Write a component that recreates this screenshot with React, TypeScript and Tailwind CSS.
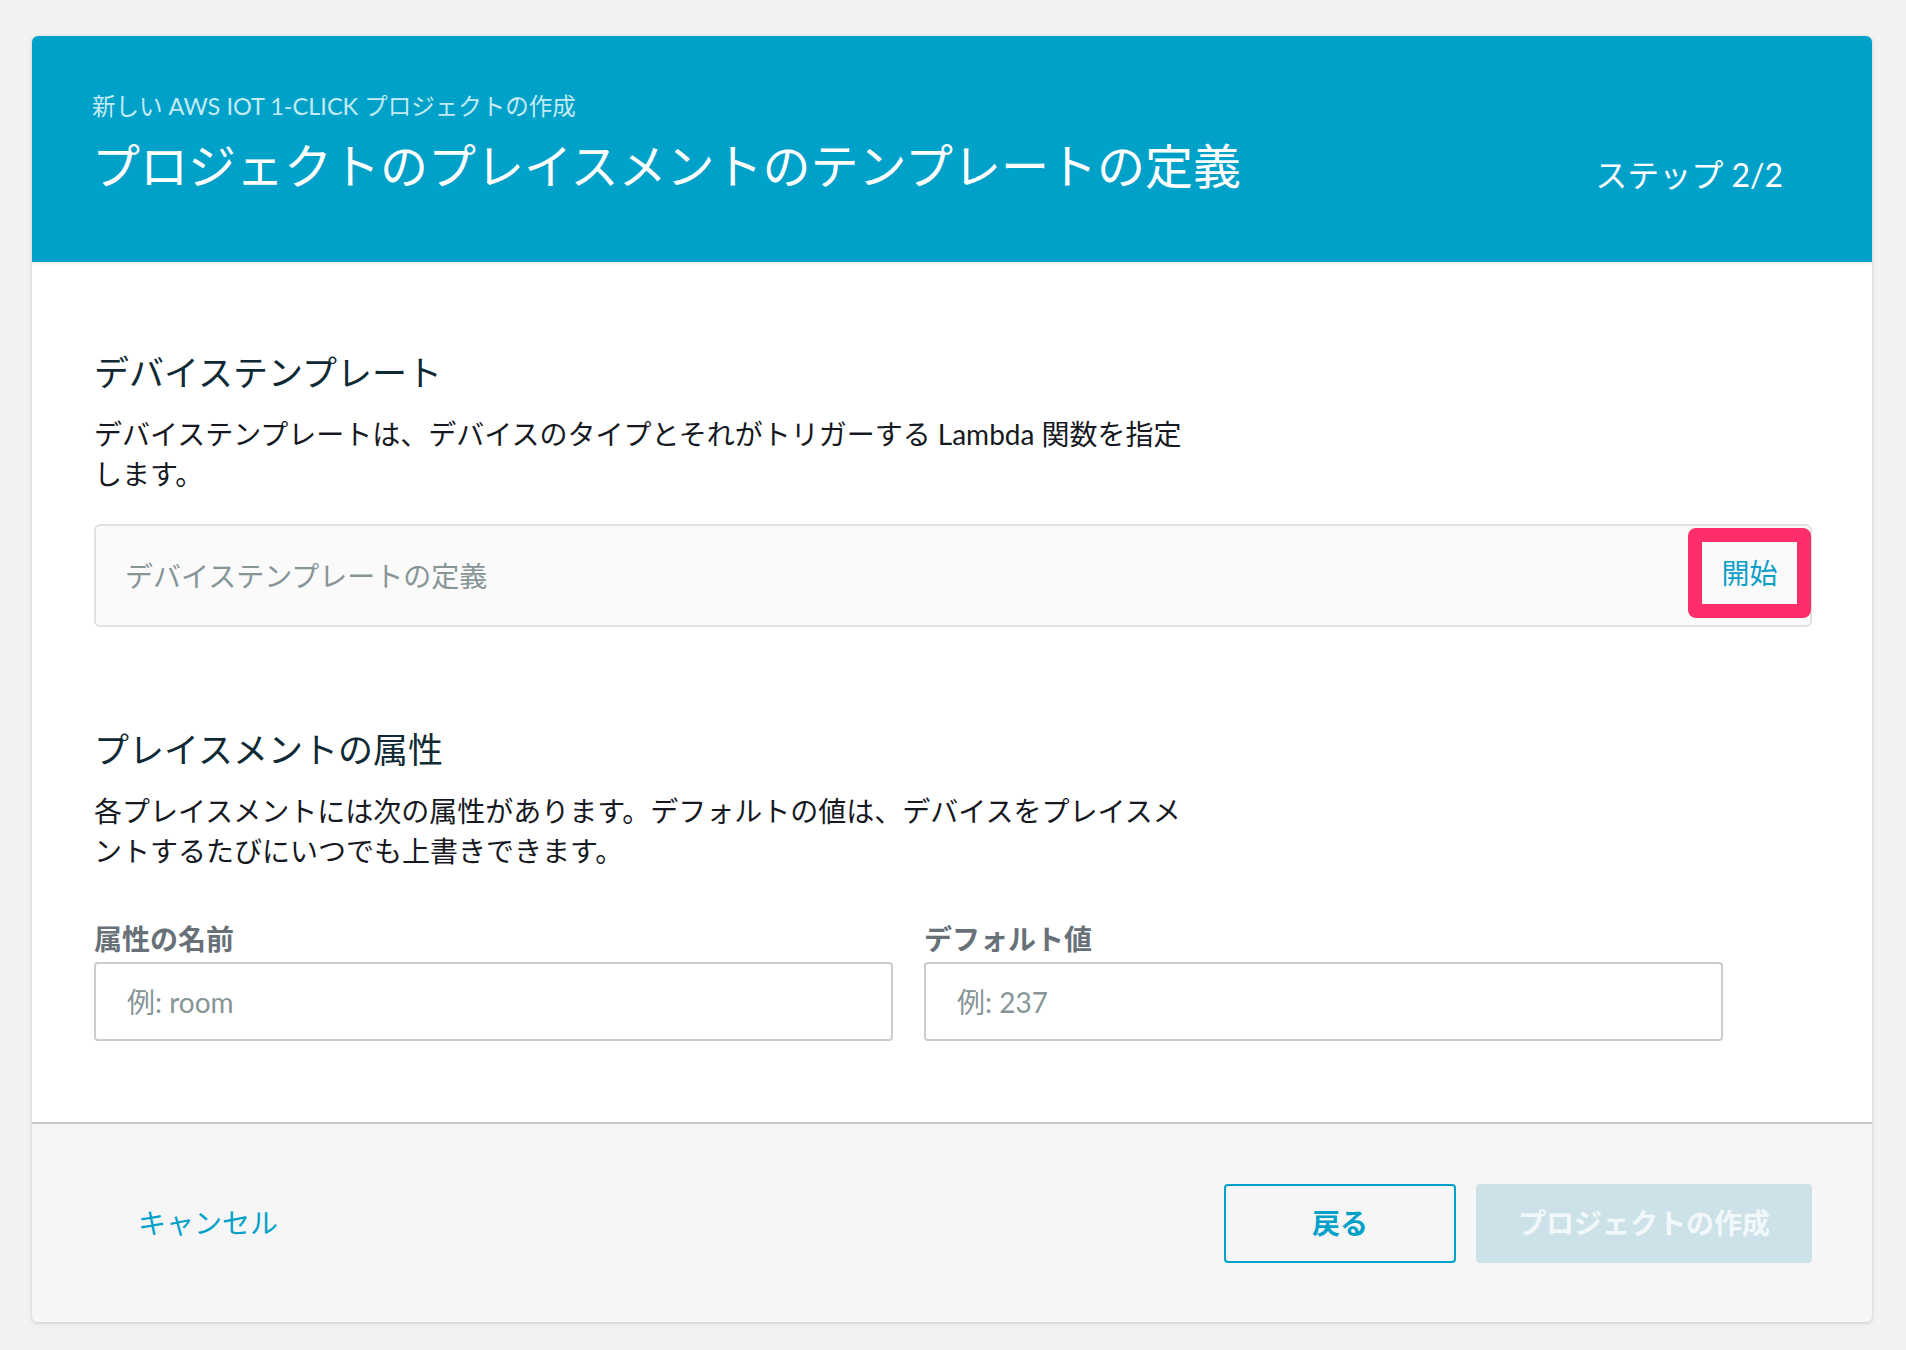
const font = { fontFamily: 'Lato, "Noto Sans CJK JP", sans-serif' };

function TextInput({ placeholder }: { placeholder: string }) {
  return (
    <input
      type="text"
      placeholder={placeholder}
      className="h-[79px] w-full rounded-[4px] border-2 border-[#cccccc] bg-white pl-[31px] text-[28px] text-[#16191f] outline-none placeholder:text-[#879596]"
      style={font}
    />
  );
}

export default function App() {
  return (
    <div className="min-h-screen bg-[#f2f2f2] pl-[32px] pr-[34px] pt-[36px] pb-[28px]" style={font}>
      <div className="overflow-hidden rounded-[6px] bg-white shadow-[0_1px_4px_rgba(0,0,0,0.18)]">
        {/* header */}
        <div className="relative z-10 flex h-[226px] items-start justify-between bg-[#00a1c9] pl-[60px] pr-[89px] shadow-[0_2px_3px_rgba(0,0,0,0.08)]">
          <div className="pt-[54px]">
            <div className="text-[23.5px] leading-[32px] text-[#c4ebf4]">
              新しい AWS IOT 1-CLICK プロジェクトの作成
            </div>
            <h1 className="mt-[14px] text-[48px] leading-[60px] font-normal text-white">
              プロジェクトのプレイスメントのテンプレートの定義
            </h1>
          </div>
          <div className="pt-[119px] text-[32px] leading-[40px] text-white">ステップ 2/2</div>
        </div>

        {/* body */}
        <div className="pl-[62px] pr-[60px] pt-[88px] pb-[81px]">
          <h2 className="text-[35px] leading-[44px] text-[#0f2a35]">デバイステンプレート</h2>
          <p className="mt-[20px] max-w-[1100px] text-[28px] leading-[40px] text-[#16191f]">
            デバイステンプレートは、デバイスのタイプとそれがトリガーする Lambda 関数を指定します。
          </p>

          <div className="mt-[30px] flex h-[103px] items-start justify-between rounded-[6px] border-2 border-[#e1e1e1] bg-[#fafafa] pl-[29px]">
            <span className="self-center text-[28px] text-[#879596]">デバイステンプレートの定義</span>
            <button className="-mr-[1px] mt-[2px] flex h-[90px] w-[123px] items-center justify-center rounded-[8px] border-[14px] border-[#fe2e6b] bg-[#fafafa] text-[28px] text-[#0d9fc8]">
              開始
            </button>
          </div>

          <h2 className="mt-[100px] text-[35px] leading-[44px] text-[#0f2a35]">プレイスメントの属性</h2>
          <p className="mt-[20px] max-w-[1100px] text-[28px] leading-[40px] text-[#16191f]">
            各プレイスメントには次の属性があります。デフォルトの値は、デバイスをプレイスメントするたびにいつでも上書きできます。
          </p>

          <div className="mt-[51px] flex gap-[31px]">
            <div className="w-[799px]">
              <label className="block text-[28px] leading-[34px] font-bold text-[#687078]">属性の名前</label>
              <div className="mt-[6px]">
                <TextInput placeholder="例: room" />
              </div>
            </div>
            <div className="w-[799px]">
              <label className="block text-[28px] leading-[34px] font-bold text-[#687078]">デフォルト値</label>
              <div className="mt-[6px]">
                <TextInput placeholder="例: 237" />
              </div>
            </div>
          </div>
        </div>

        {/* footer */}
        <div className="flex h-[200px] items-center justify-between border-t-2 border-[#c8c8c8] bg-[#f6f6f6] pl-[106px] pr-[60px]">
          <a className="text-[28px] text-[#00a1c9]">キャンセル</a>
          <div className="flex gap-[20px]">
            <button className="h-[79px] w-[232px] rounded-[4px] border-2 border-[#00a1c9] bg-[#f6f6f6] text-[28px] font-bold text-[#00a1c9]">
              戻る
            </button>
            <button
              disabled
              className="h-[79px] w-[336px] rounded-[4px] bg-[#cce2e8] text-[28px] font-bold text-[#f2f8fa]"
            >
              プロジェクトの作成
            </button>
          </div>
        </div>
      </div>
    </div>
  );
}
